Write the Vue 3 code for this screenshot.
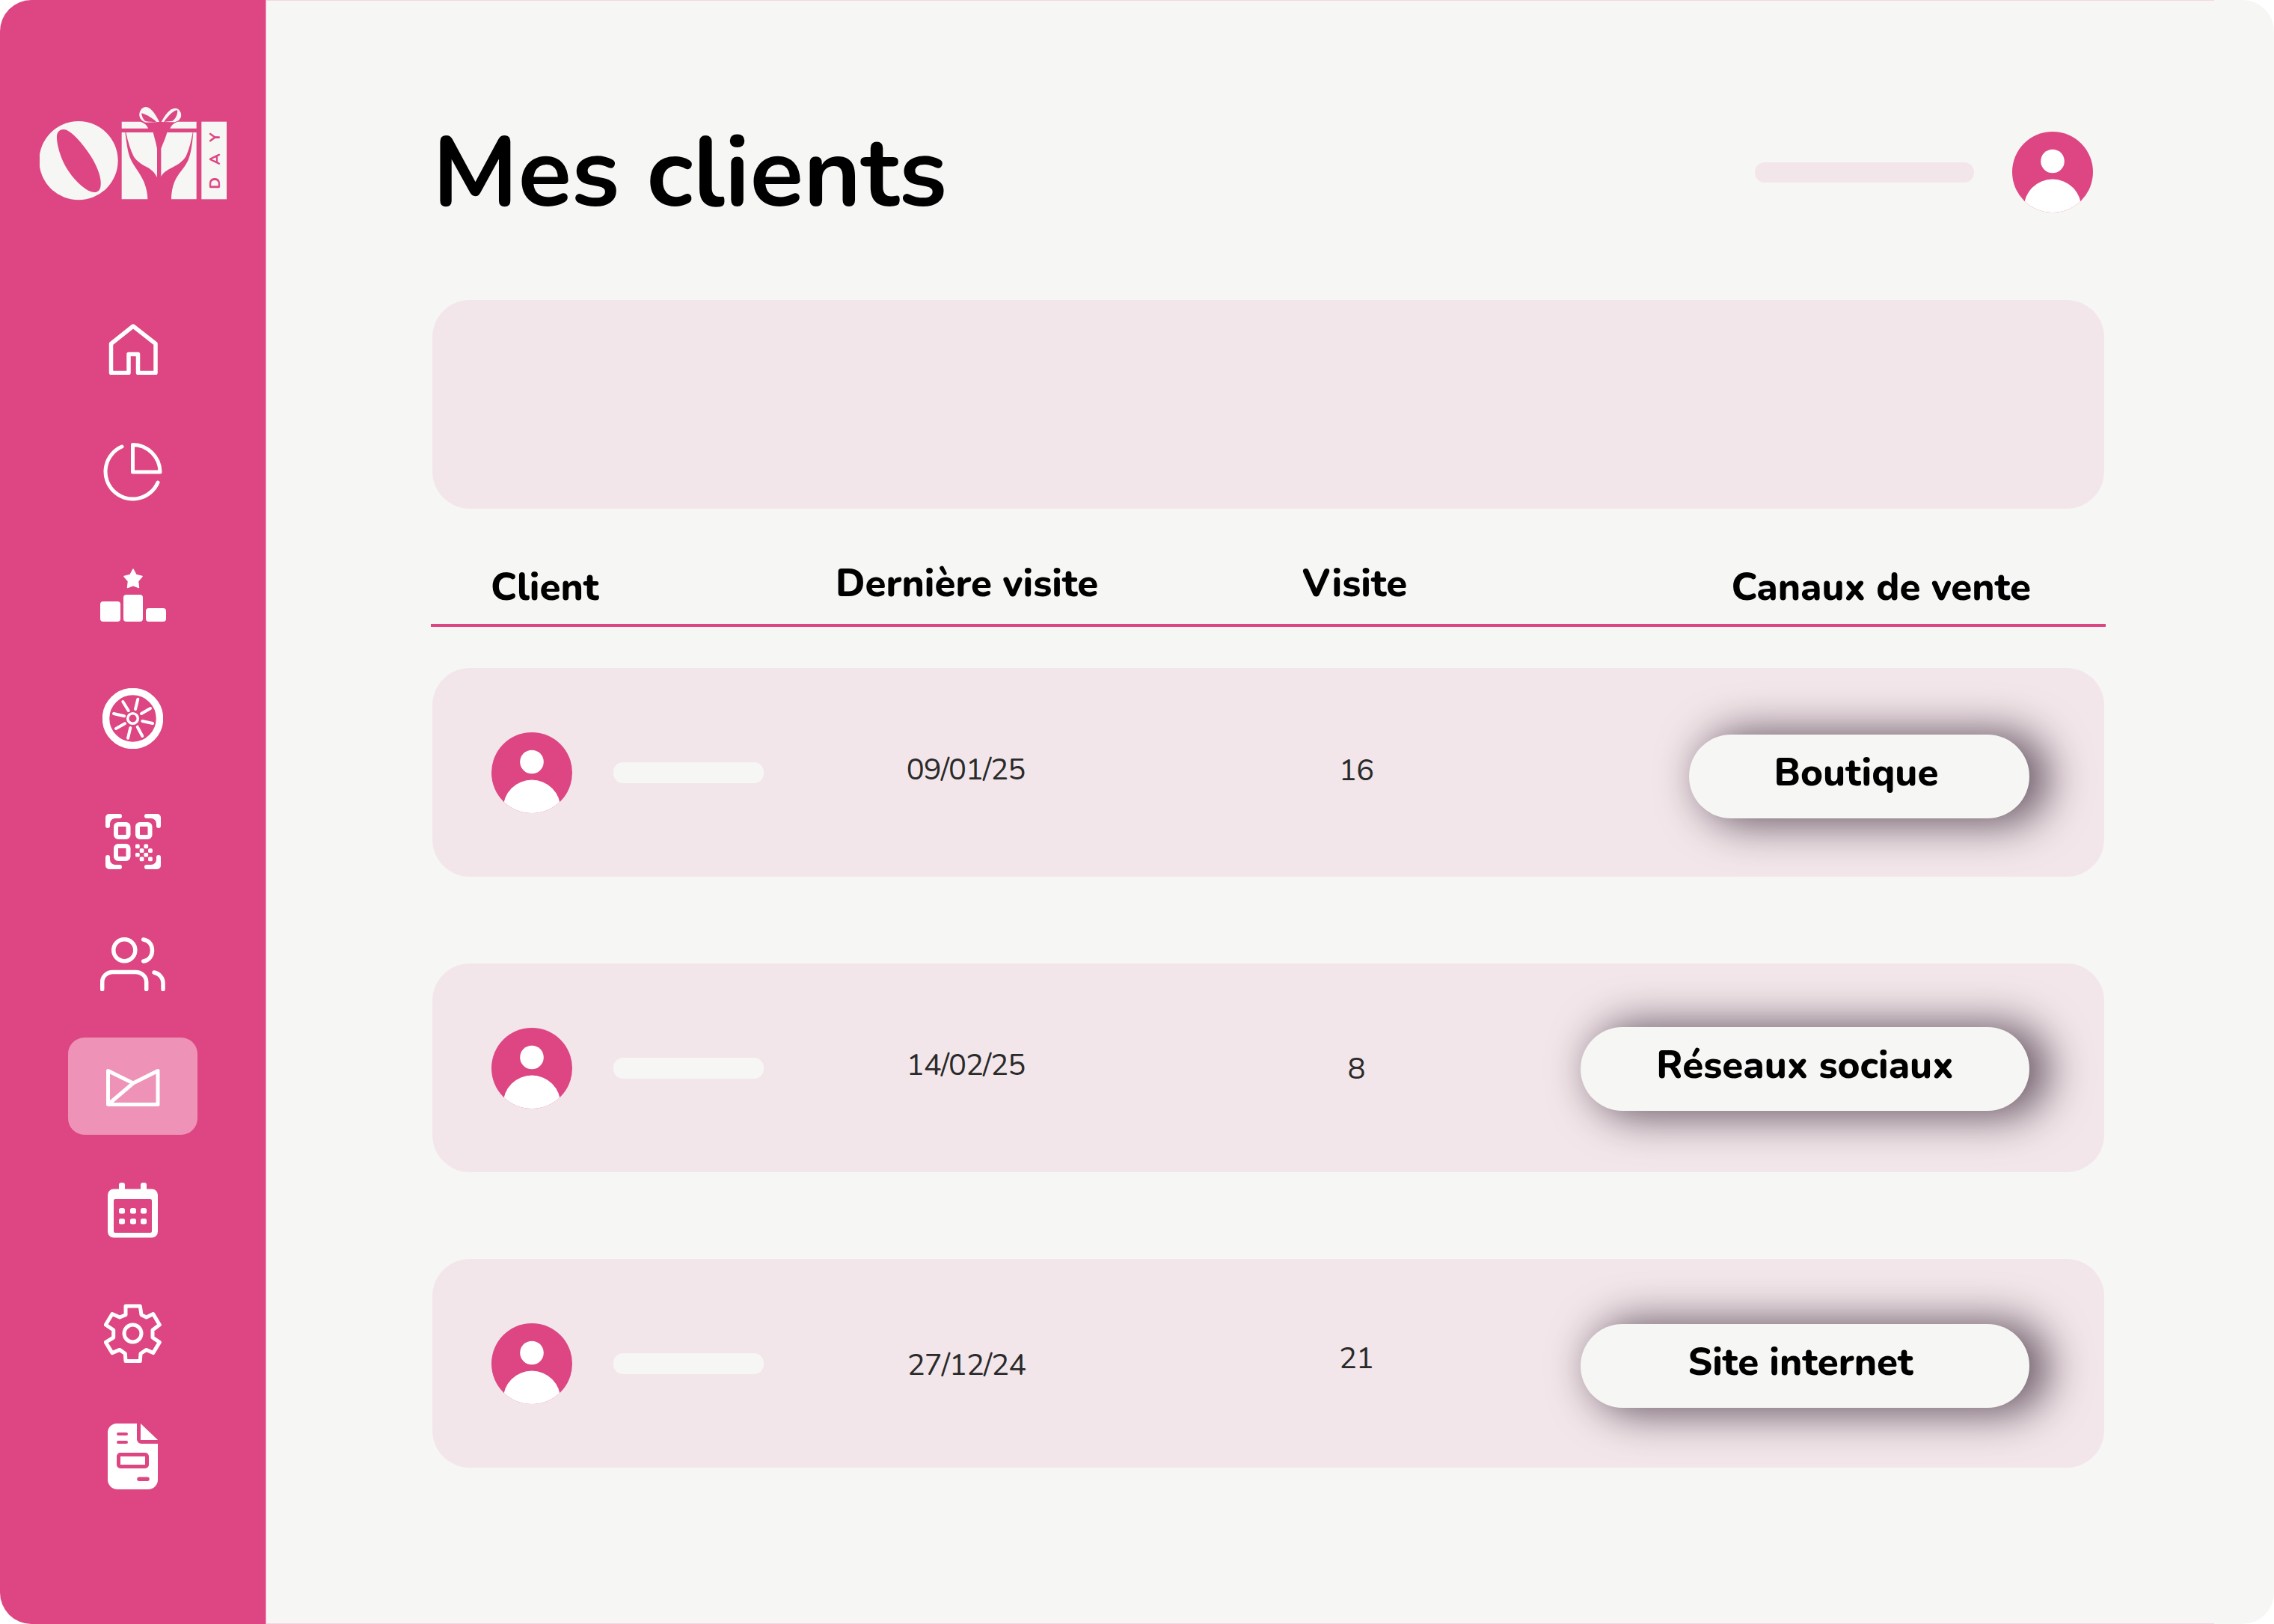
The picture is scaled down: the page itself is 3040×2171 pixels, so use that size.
<script setup>
const nav = ['home','pie','podium','wheel','qr','users','mail','cal','gear','doc']
const rows = [
  { date: '09/01/25', visits: '16', channel: 'Boutique', cls: 'r1' },
  { date: '14/02/25', visits: '8', channel: 'Réseaux sociaux', cls: 'r2' },
  { date: '27/12/24', visits: '21', channel: 'Site internet', cls: 'r3' },
]
const checker = [[0,0],[0,2],[1,1],[1,3],[2,0],[2,2],[3,1],[3,3]]
</script>

<template>
  <div class="page">
    <aside class="side">
      <svg class="logo" viewBox="157 130 750 375" width="250" height="125">
        <g fill="#f6f6f4">
          <circle cx="313" cy="345" r="158"/>
          <path d="M486 189H560C575 192 588 203 592 216H486Z"/>
          <path d="M786 189H712C697 192 685 203 680 216H786Z"/>
          <path d="M486 232H500C505 270 510 310 520 335C535 370 560 395 575 430C585 455 590 480 590 500H486Z"/>
          <path d="M503 232H612C618 255 625 280 628 297V412C620 395 605 380 585 370C565 360 545 345 535 330C520 300 510 265 503 232Z"/>
          <path d="M771 232H668C662 255 648 285 644 297V410C650 395 665 385 690 372C715 360 735 345 745 325C758 295 765 265 771 232Z"/>
          <path d="M786 232H773C770 270 765 315 752 345C735 380 712 395 698 430C688 455 685 480 685 500H786Z"/>
          <path d="M637 190C625 165 605 132 585 130C565 130 555 150 557 165C560 180 572 190 585 192Z"/>
          <path d="M645 190C660 160 680 135 700 135C718 135 727 155 724 168C720 182 708 190 692 191Z"/>
          <rect x="806" y="189" width="101" height="311"/>
        </g>
        <g fill="#dd4682">
          <path d="M226 245C228 225 245 215 265 222C300 240 340 290 370 340C395 385 410 430 398 460C388 478 365 475 340 458C300 430 265 385 245 335C232 300 225 270 226 245Z"/>
          <path d="M566 155C585 160 615 178 625 190C605 190 585 190 578 185C570 175 566 165 566 155Z"/>
          <path d="M655 190C670 170 690 145 709 143C712 160 700 180 690 186Z"/>
          <text class="day" transform="translate(879 459) rotate(-90)">DAY</text>
        </g>
      </svg>
      <nav class="nav">
        <div v-for="n in nav" :key="n" class="nav-item" :class="{ active: n === 'mail' }">
          <svg v-if="n==='home'" width="66" height="68" viewBox="0 0 66 68" fill="none" stroke="#fff" stroke-width="5.5" stroke-linejoin="round"><path d="M33 3L3.500 26.500V65.500H27V40.500H39.500V65.500H63V26.500Z"/></svg>
          <svg v-if="n==='pie'" width="79" height="79" viewBox="0 0 79 79" fill="none" stroke="#fff" stroke-width="5" stroke-linecap="round" stroke-linejoin="round"><path d="M25 5A36.500 36.500 0 1 0 73 53"/><path d="M39.500 2.500A37 37 0 0 1 76 39H39.500Z"/></svg>
          <svg v-if="n==='podium'" width="88" height="71" viewBox="0 0 88 71" fill="#fff"><path stroke="#fff" stroke-width="1.500" stroke-linejoin="round" d="M44 1L48 8.500 56 10.500 50.500 17 51.500 25.500 44 22.500 36.500 25.500 37.500 17 32 10.500 40 8.500Z"/><rect x="0" y="44" width="27" height="27" rx="4"/><rect x="31" y="35" width="26" height="36" rx="4"/><rect x="61" y="53" width="27" height="18" rx="4"/></svg>
          <svg v-if="n==='wheel'" width="81" height="81" viewBox="0 0 81 81" fill="none" stroke="#fff" stroke-linecap="round"><circle cx="40.500" cy="40.500" r="36" stroke-width="9.500"/><circle cx="40.500" cy="40.500" r="6.800" stroke-width="3.500"/><path stroke-width="4" d="M47.300 14.700L44 28M64 27L52 34M67 47L53.300 44M53.300 64L46.700 51.700M34 66.700L37.300 53M18 54L30 47.300M15 34L29 37.300M27.300 18L34.700 30"/></svg>
          <svg v-if="n==='qr'" width="74" height="74" viewBox="0 0 74 74" fill="#fff">
            <path d="M5 0h14a3 3 0 0 1 0 6h-6a7 7 0 0 0-7 7v3a3 3 0 0 1-6 0V5a5 5 0 0 1 5-5zM69 0h-14a3 3 0 0 0 0 6h6a7 7 0 0 1 7 7v3a3 3 0 0 0 6 0V5a5 5 0 0 0-5-5zM5 74h14a3 3 0 0 0 0-6h-6a7 7 0 0 1-7-7v-3a3 3 0 0 0-6 0v11a5 5 0 0 0 5 5zM69 74h-14a3 3 0 0 1 0-6h6a7 7 0 0 0 7-7v-3a3 3 0 0 1 6 0v11a5 5 0 0 1-5 5z"/>
            <g fill="none" stroke="#fff" stroke-width="6"><rect x="14" y="14" width="16.500" height="17" rx="3"/><rect x="43" y="14" width="16.500" height="17" rx="3"/><rect x="14" y="43" width="16.500" height="17" rx="3"/></g>
            <rect v-for="c in checker" :key="c.join()" :x="40 + c[1] * 5.700" :y="40.500 + c[0] * 5.700" width="5.700" height="5.700" rx="1.500"/>
          </svg>
          <svg v-if="n==='users'" width="87" height="72" viewBox="0 0 87 72" fill="none" stroke="#fff" stroke-width="5.500" stroke-linecap="round"><circle cx="32.300" cy="17.300" r="14.500"/><path d="M57.700 3C65 4 69.500 10 69.500 17.500S65 31 57.700 32"/><path d="M2.700 69.500V60C2.700 52 9 46.500 17 46.500H47C55 46.500 61.700 52 61.700 60V69.500"/><path d="M72 47C79 48.500 84 54 84 61V69.500"/></svg>
          <svg v-if="n==='mail'" class="mail-ic" width="72" height="50" viewBox="0 0 72 50" fill="none" stroke="#fff" stroke-width="5" stroke-linejoin="round"><path d="M2.500 47.500V2.500L36 19"/><path d="M2.500 47.500H69V2.500L36 19L2.500 47.500Z" /></svg>
          <svg v-if="n==='cal'" width="67" height="74" viewBox="0 0 67 74" fill="#fff"><path fill-rule="evenodd" d="M18 0h2a3 3 0 0 1 3 3v5.500h21V3a3 3 0 0 1 3-3h2a3 3 0 0 1 3 3v5.500h7a8 8 0 0 1 8 8v49a8 8 0 0 1-8 8H8a8 8 0 0 1-8-8v-49a8 8 0 0 1 8-8h7V3a3 3 0 0 1 3-3zM10 22a2 2 0 0 0-2 2v41a2 2 0 0 0 2 2h47a2 2 0 0 0 2-2V24a2 2 0 0 0-2-2z"/><rect x="15" y="34" width="8" height="7.500" rx="2.500"/><rect x="30" y="34" width="8" height="7.500" rx="2.500"/><rect x="44" y="34" width="8" height="7.500" rx="2.500"/><rect x="15" y="48" width="8" height="7.500" rx="2.500"/><rect x="30" y="48" width="8" height="7.500" rx="2.500"/><rect x="44" y="48" width="8" height="7.500" rx="2.500"/></svg>
          <svg v-if="n==='gear'" width="77" height="79" viewBox="0 0 77 79" fill="none" stroke="#fff" stroke-width="5" stroke-linejoin="round"><circle cx="38.500" cy="39.500" r="11.500"/><path d="M29 3H48.300L50 14.700 56.700 18 65.700 13.500 74.300 28 65 35V45L74.300 51.400 65.700 65.600 56.700 61.400 49 66.500 48.300 76.600H29L28.300 66.500 21 61.400 11 65.600 2.300 51.400 12.700 45V35L2.300 28 11 13.500 21 18 29 14.700Z"/></svg>
          <svg v-if="n==='doc'" width="67" height="88" viewBox="0 0 67 88" fill="#fff"><path fill-rule="evenodd" d="M12 0H39V21a6 6 0 0 0 6 6H67V75a13 13 0 0 1-13 13H13A13 13 0 0 1 0 75V12A12 12 0 0 1 12 0ZM14 12a2 2 0 0 0 0 4H25a2 2 0 0 0 0-4ZM14 23a2 2 0 0 0 0 4H25a2 2 0 0 0 0-4ZM17 39a5 5 0 0 0-5 5V55a5 5 0 0 0 5 5H50a5 5 0 0 0 5-5V44a5 5 0 0 0-5-5ZM17 44H50V55H17ZM42 71.500a2.700 2.700 0 0 0 0 5.500H53a2.700 2.700 0 0 0 0-5.500Z"/><path d="M44 0L67 22H44Z"/></svg>
        </div>
      </nav>
    </aside>
    <main class="main">
      <header class="top">
        <h1>Mes clients</h1>
        <div class="top-right">
          <div class="search"></div>
          <svg class="avatar" viewBox="0 0 108 108" width="108" height="108"><defs><clipPath id="ca"><circle cx="54" cy="54" r="54"/></clipPath></defs><circle cx="54" cy="54" r="54" fill="#dd4682"/><g clip-path="url(#ca)" fill="#fff"><circle cx="54" cy="39.500" r="15.800"/><circle cx="54" cy="102" r="38.400"/></g></svg>
        </div>
      </header>
      <div class="banner"></div>
      <div class="thead">
        <span class="h1c">Client</span>
        <span class="h2c">Dernière visite</span>
        <span class="h3c">Visite</span>
        <span class="h4c">Canaux de vente</span>
      </div>
      <div class="rows">
        <div v-for="r in rows" :key="r.date" class="row" :class="r.cls">
          <div class="who">
            <svg class="avatar" viewBox="0 0 108 108" width="108" height="108"><circle cx="54" cy="54" r="54" fill="#dd4682"/><g clip-path="url(#ca)" fill="#fff"><circle cx="54" cy="39.500" r="15.800"/><circle cx="54" cy="102" r="38.400"/></g></svg>
            <div class="bar"></div>
          </div>
          <div class="date">{{ r.date }}</div>
          <div class="visits">{{ r.visits }}</div>
          <div class="chan"><div class="pill">{{ r.channel }}</div></div>
        </div>
      </div>
    </main>
  </div>
</template>

<style>
html, body { margin: 0; background: #fff; }
</style>

<style scoped>
.page { width: 3040px; height: 2171px; display: flex; background: #f6f6f4; border-radius: 42px; overflow: hidden; font-family: "Nunito", "Noto Sans", sans-serif; }
.side { width: 356px; background: #dd4682; border-right: 1px solid #f2a9c6; flex: none; display: flex; flex-direction: column; align-items: center; padding-top: 143px; box-sizing: border-box; }
.logo { flex: none; display: block; }
.day { font-family: "Nunito", sans-serif; font-size: 62px; font-weight: 700; letter-spacing: 50px; }
.nav { margin-top: 132px; display: flex; flex-direction: column; align-items: center; gap: 34.5px; }
.nav-item { width: 173px; height: 130px; display: flex; align-items: center; justify-content: center; border-radius: 22px; }
.nav-item svg { margin-top: 3px; }
.nav-item.active { background: #ee93b7; }
.main { flex: 1; min-width: 0; padding: 0 227px 0 222px; box-sizing: border-box; background: linear-gradient(#f6d6e3, #f6d6e3) top left / 2604px 1px no-repeat, linear-gradient(#f6d6e3, #f6d6e3) bottom left / 2604px 1px no-repeat; }
.top { height: 401px; display: flex; justify-content: space-between; align-items: flex-start; }
h1 { margin: 159px 0 0 0; font-size: 132px; font-weight: 700; line-height: 146px; color: #000; }
.top-right { display: flex; align-items: center; gap: 51px; margin-top: 176px; padding-right: 15px; }
.search { width: 293px; height: 27px; border-radius: 13px; background: #f3e6ea; }
.avatar { display: block; flex: none; }
.banner { height: 279px; border-radius: 50px; background: #f3e6ea; }
.thead { height: 158px; border-bottom: 4.5px solid #dd4682; box-sizing: border-box; margin: 0 -2px; display: grid; grid-template-columns: 461px 624px 1fr auto; font-size: 51px; font-weight: 800; color: #000; padding: 0 100px 0 80px; line-height: 60px; }
.h1c { margin-top: 75px; }
.h2c { margin-top: 70px; }
.h3c { margin-top: 70px; }
.h4c { margin-top: 75px; }
.rows { margin-top: 55px; display: flex; flex-direction: column; gap: 116px; }
.row { height: 279px; border-radius: 50px; background: #f3e6ea; display: grid; grid-template-columns: 426px 416px 628px minmax(0, 1fr); align-items: center; padding: 0 100px 0 79px; box-sizing: border-box; }
.who { display: flex; align-items: center; gap: 55px; }
.bar { width: 201px; height: 28px; border-radius: 13px; background: #f6f6f4; }
.date, .visits { font-size: 40px; letter-spacing: -1px; color: #2a2a2a; text-align: center; line-height: 50px; }
.r1 .date { margin-bottom: 8px; }
.r2 .date { margin-bottom: 7px; }
.r3 .date { margin-top: 5px; margin-left: 2px; }
.r1 .visits { margin-bottom: 6px; }
.r2 .visits { margin-top: 2px; }
.r3 .visits { margin-bottom: 13px; }
.chan { min-width: 0; display: flex; justify-content: flex-end; }
.pill { flex: none; height: 112px; line-height: 103px; background: #f6f6f4; border-radius: 56px; font-size: 51px; font-weight: 800; color: #000; text-align: center; box-shadow: 20px 2px 56px 6px rgba(20,0,20,.62); box-sizing: border-box; }
.r1 .chan { margin-top: 11px; }
.r2 .chan { margin-top: 3px; }
.r3 .chan { margin-top: 7px; }
.r1 .pill { width: 455px; padding-right: 8px; }
.r2 .pill { width: 600px; }
.r3 .pill { width: 600px; padding-right: 12px; }
</style>
